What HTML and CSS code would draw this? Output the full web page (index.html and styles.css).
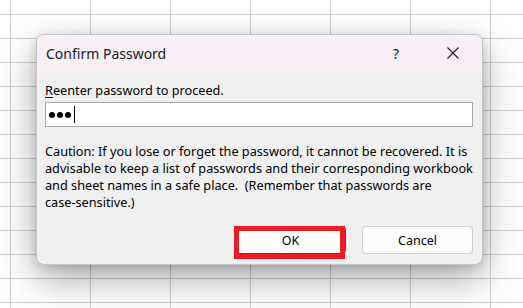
FILE: index.html
```html
<!DOCTYPE html>
<html>
<head>
<meta charset="utf-8">
<link rel="stylesheet" href="styles.css">
</head>
<body>
<div class="sheet">
  <div class="dlg">
    <div class="titlebar">
      <span class="title">Confirm Password</span>
      <span class="help">?</span>
      <span class="close"><svg width="12" height="12" viewBox="0 0 12 12"><path d="M0.5 0.5L11.5 11.5M11.5 0.5L0.5 11.5" stroke="#1f1f1f" stroke-width="1.1" fill="none"/></svg></span>
    </div>
    <div class="content">
      <div class="label"><u>R</u>eenter password to proceed.</div>
      <div class="input"><span class="dot"></span><span class="dot"></span><span class="dot"></span><span class="caret"></span></div>
      <p class="caution">Caution: If you lose or forget the password, it cannot be recovered. It is<br>advisable to keep a list of passwords and their corresponding workbook<br>and sheet names in a safe place.&nbsp; (Remember that passwords are<br>case-sensitive.)</p>
      <div class="buttons">
        <div class="okwrap">
          <button class="btn ok">OK</button>
          <span class="mark"></span>
        </div>
        <button class="btn">Cancel</button>
      </div>
    </div>
  </div>
</div>
</body>
</html>
```
FILE: styles.css
```css
html, body {
  margin: 0;
  padding: 0;
}
body {
  width: 523px;
  height: 308px;
  overflow: hidden;
  font-family: "Noto Sans", "Open Sans", sans-serif;
}
.sheet {
  width: 523px;
  height: 308px;
  padding: 34px 0 0 36px;
  box-sizing: border-box;
  background-color: #ffffff;
  background-image:
    linear-gradient(to right, #cfcfcf 1px, transparent 1px),
    linear-gradient(to bottom, #cfcfcf 1px, transparent 1px);
  background-size: 80px 24px;
  background-position: 10px 14px;
}
.dlg {
  position: relative;
  width: 447px;
  height: 231px;
  box-sizing: border-box;
  border: 1px solid #c4c4c4;
  border-radius: 8px;
  background: #f0f0f0;
  box-shadow: 0 14px 38px rgba(0, 0, 0, 0.34), 0 2px 10px rgba(0, 0, 0, 0.14);
}
.titlebar {
  height: 37px;
  display: flex;
  align-items: center;
  background: #f7eef6;
  border-radius: 7px 7px 0 0;
  padding-left: 9px;
}
.title {
  font-size: 14px;
  color: #1a1a1a;
  flex: 1;
  margin-top: -1px;
}
.help {
  font-size: 14px;
  color: #1a1a1a;
  margin-right: 48px;
  margin-top: -1px;
}
.close {
  display: flex;
  margin-right: 23px;
  margin-top: -1px;
}
.content {
  padding: 0 9px 0 8px;
}
.label {
  font-size: 12.7px;
  line-height: 16px;
  margin-top: 10px;
  color: #000;
}
.label u {
  text-decoration-thickness: 1px;
  text-underline-offset: 2px;
}
.input {
  margin-top: 4px;
  height: 25px;
  box-sizing: border-box;
  border: 1px solid #a8a8a8;
  background: #fff;
  display: flex;
  align-items: center;
  padding-left: 3px;
  gap: 2px;
}
.dot {
  width: 6px;
  height: 6px;
  border-radius: 50%;
  background: #000;
}
.caret {
  width: 1px;
  height: 17px;
  background: #000;
  margin-left: 1px;
}
.caution {
  margin: 16px 0 0 0;
  font-size: 12.7px;
  line-height: 17px;
  color: #000;
  white-space: nowrap;
}
.buttons {
  margin-top: 15px;
  display: flex;
  justify-content: flex-end;
  gap: 16px;
}
.okwrap {
  position: relative;
  display: flex;
}
.btn {
  width: 111px;
  height: 28px;
  box-sizing: border-box;
  border: 1px solid #d0d0d0;
  border-radius: 4px;
  background: #fdfdfd;
  font-family: "Noto Sans", "Open Sans", sans-serif;
  font-size: 12.5px;
  color: #000;
  padding: 0;
}
.btn.ok {
  border: 1px solid #005fb8;
  border-radius: 4px;
}
.mark {
  position: absolute;
  left: -1px;
  top: 0;
  width: 111px;
  height: 33px;
  box-sizing: border-box;
  border: 5px solid #ed1c24;
  background: transparent;
}
```
